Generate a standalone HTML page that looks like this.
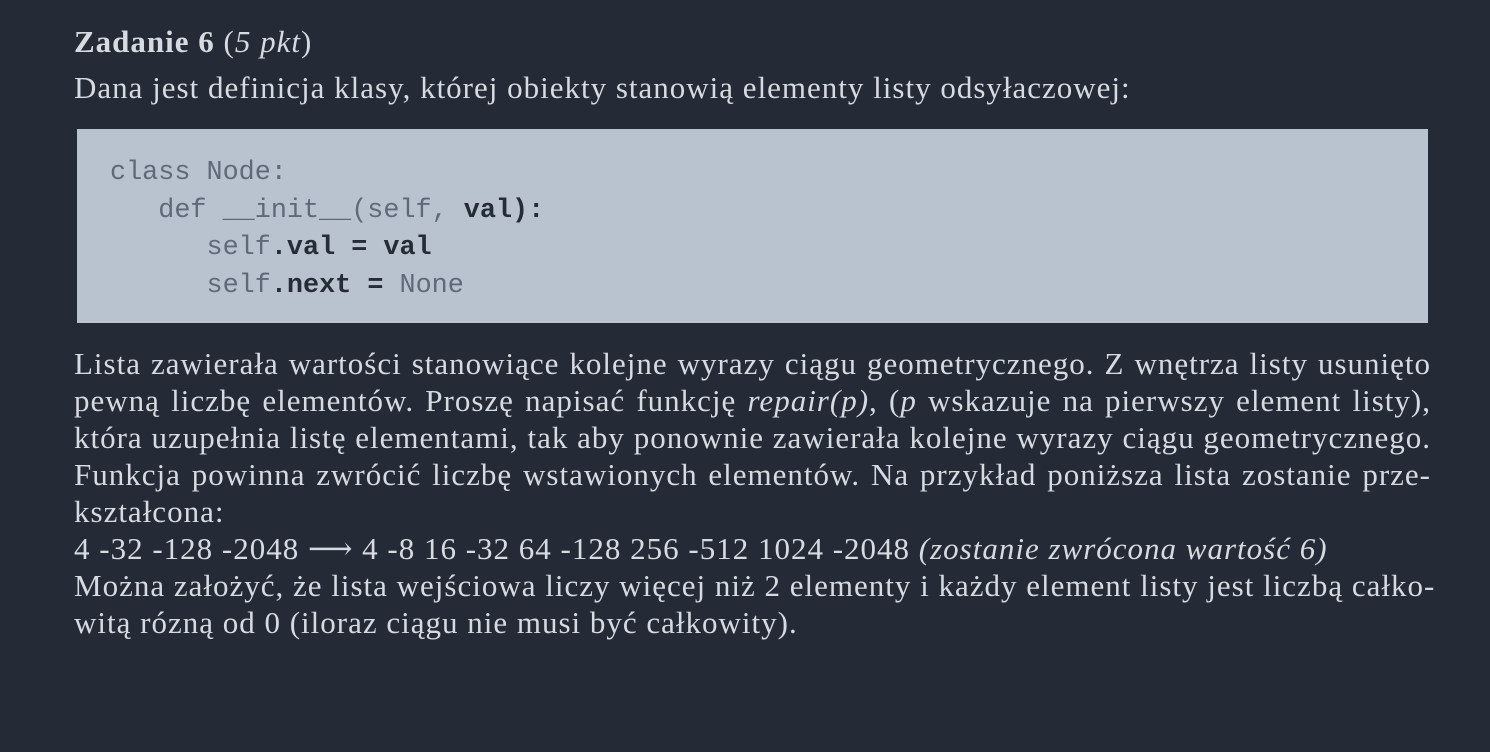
<!DOCTYPE html>
<html><head><meta charset="utf-8"><style>
html,body{margin:0;padding:0;background:#252b36;width:1490px;height:752px;overflow:hidden}
body{font-family:"Liberation Serif","DejaVu Serif",serif;color:#d6dae1;font-size:31px;line-height:37px;letter-spacing:1px}
.wrap{position:absolute;left:74px;width:1357px}
.j div{text-align:justify;text-align-last:justify;white-space:nowrap}
.j div.l{text-align-last:left}
pre{position:absolute;left:77px;top:129px;width:1351px;height:194px;margin:0;background:#b9c3cf;box-sizing:border-box;padding:26px 0 0 33px;font-family:"Liberation Mono",monospace;font-size:26.8px;line-height:37.5px;color:#262c36;font-weight:bold;letter-spacing:0}
.g{color:#5f6a78;font-weight:normal}
</style></head><body>
<div class="wrap" style="top:23px"><b>Zadanie 6</b> (<i>5 pkt</i>)</div>
<div class="wrap" style="top:69px">Dana jest definicja klasy, której obiekty stanowią elementy listy odsyłaczowej:</div>
<pre><span class="g">class Node:</span>
   <span class="g">def __init__(self,</span> val):
      <span class="g">self</span>.val = val
      <span class="g">self</span>.next = <span class="g">None</span></pre>
<div class="wrap j" style="top:345px">
<div>Lista zawierała wartości stanowiące kolejne wyrazy ciągu geometrycznego. Z wnętrza listy usunięto</div>
<div>pewną liczbę elementów. Proszę napisać funkcję <i>repair(p)</i>, (<i>p</i> wskazuje na pierwszy element listy),</div>
<div>która uzupełnia listę elementami, tak aby ponownie zawierała kolejne wyrazy ciągu geometrycznego.</div>
<div>Funkcja powinna zwrócić liczbę wstawionych elementów. Na przykład poniższa lista zostanie prze-</div>
<div class="l">kształcona:</div>
<div class="l">4 -32 -128 -2048 ⟶ 4 -8 16 -32 64 -128 256 -512 1024 -2048 <i>(zostanie zwrócona wartość 6)</i></div>
<div>Można założyć, że lista wejściowa liczy więcej niż 2 elementy i każdy element listy jest liczbą całko-</div>
<div class="l">witą rózną od 0 (iloraz ciągu nie musi być całkowity).</div>
</div>
</body></html>
